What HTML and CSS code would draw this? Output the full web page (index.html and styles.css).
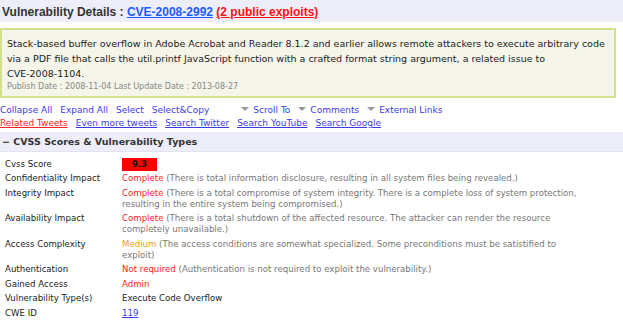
FILE: index.html
```html
<!DOCTYPE html>
<html lang="en">
  <head>
    <meta charset="UTF-8" />
    <title>CVE-2008-2992 : Vulnerability Details</title>
    <link rel="stylesheet" href="styles.css">
  </head>
  <body>
    <div class="page">
      <h1 class="title">
        Vulnerability Details :
        <a href="#" class="cve-link">CVE-2008-2992</a>
        <a href="#" class="exploits">(2 public exploits)</a>
      </h1>

      <div class="summary">
        <div class="summary-text">
          Stack-based buffer overflow in Adobe Acrobat and Reader 8.1.2 and earlier allows remote attackers to execute arbitrary code via a PDF file that calls the util.printf JavaScript function with a crafted format string argument, a related issue to <span class="nowrap">CVE-2008-1104.</span>
        </div>
        <div class="dates">Publish Date : 2008-11-04 Last Update Date : 2013-08-27</div>
      </div>

      <div class="tools">
        <div class="tool-row">
          <span class="tool">Collapse All</span>
          <span class="tool">Expand All</span>
          <span class="tool">Select</span>
          <span class="tool">Select&amp;Copy</span>
          <span class="tool drop spaced">Scroll To</span>
          <span class="tool drop">Comments</span>
          <span class="tool drop">External Links</span>
        </div>
        <div class="tool-row">
          <a href="#" class="tool-link hot">Related Tweets</a>
          <a href="#" class="tool-link">Even more tweets</a>
          <a href="#" class="tool-link">Search Twitter</a>
          <a href="#" class="tool-link">Search YouTube</a>
          <a href="#" class="tool-link">Search Google</a>
        </div>
      </div>

      <div class="section-head">&minus; CVSS Scores &amp; Vulnerability Types</div>

      <table class="cvss">
        <tr>
          <th>Cvss Score</th>
          <td><span class="score">9.3</span></td>
        </tr>
        <tr>
          <th>Confidentiality Impact</th>
          <td><span class="bad">Complete</span> (There is total information disclosure, resulting in all system files being revealed.)</td>
        </tr>
        <tr>
          <th>Integrity Impact</th>
          <td><span class="bad">Complete</span> (There is a total compromise of system integrity. There is a complete loss of system protection, resulting in the entire system being compromised.)</td>
        </tr>
        <tr>
          <th>Availability Impact</th>
          <td><span class="bad">Complete</span> (There is a total shutdown of the affected resource. The attacker can render the resource completely unavailable.)</td>
        </tr>
        <tr>
          <th>Access Complexity</th>
          <td><span class="warn">Medium</span> (The access conditions are somewhat specialized. Some preconditions must be satistified to exploit)</td>
        </tr>
        <tr>
          <th>Authentication</th>
          <td><span class="bad">Not required</span> (Authentication is not required to exploit the vulnerability.)</td>
        </tr>
        <tr>
          <th>Gained Access</th>
          <td><span class="bad">Admin</span></td>
        </tr>
        <tr>
          <th>Vulnerability Type(s)</th>
          <td class="plain">Execute Code Overflow</td>
        </tr>
        <tr>
          <th>CWE ID</th>
          <td><a href="#" class="cwe">119</a></td>
        </tr>
      </table>

      <div class="next-head"></div>
    </div>
  </body>
</html>
```

FILE: styles.css
```css
body {
  margin: 0;
  background: #fff;
  font-family: "DejaVu Sans", Verdana, sans-serif;
  font-size: 9px;
  color: #333;
}
.page {
  width: 623px;
}
.title {
  margin: 0;
  height: 22px;
  padding: 5px 0 0 2px;
  box-sizing: border-box;
  background: #eeeefb;
  font-family: "Liberation Sans", Arial, sans-serif;
  font-size: 12px;
  font-weight: bold;
  color: #333;
}
.cve-link {
  color: #1a5cff;
  text-decoration: underline;
}
.exploits {
  color: #ff1111;
  text-decoration: underline;
}
.summary {
  margin: 6px 7px 0 0;
  border: 2px solid #d3e08f;
  background: #f5f5ea;
  padding: 6px 5px 4px 5px;
}
.summary-text {
  font-size: 9.5px;
  line-height: 15px;
  color: #222;
}
.nowrap {
  white-space: nowrap;
}
.dates {
  font-size: 8px;
  color: #888;
  line-height: 11px;
}
.tools {
  padding: 6px 0 0 0;
}
.tool-row {
  display: flex;
  gap: 8px;
  line-height: 13px;
  font-size: 9px;
}
.tool {
  color: #3b3be6;
}
.drop::before {
  content: "";
  display: inline-block;
  border-left: 4px solid transparent;
  border-right: 4px solid transparent;
  border-top: 4px solid #999;
  margin-right: 4px;
  vertical-align: 2px;
}
.spaced {
  margin-left: 24px;
}
.tool-link {
  color: #3b3be6;
  text-decoration: underline;
}
.tool-link.hot {
  color: #ff2222;
}
.section-head {
  margin-top: 2px;
  height: 20px;
  line-height: 19px;
  background: #eeeefb;
  border-bottom: 1px solid #e2e2f2;
  box-sizing: border-box;
  padding-left: 2px;
  font-size: 9.5px;
  font-weight: bold;
  color: #333;
}
.cvss {
  border-collapse: collapse;
  margin: 5px 0 0 3px;
  width: 584px;
}
.cvss th,
.cvss td {
  text-align: left;
  vertical-align: top;
  padding: 1.5px 2px 2px 2px;
  line-height: 11px;
  font-size: 8.6px;
}
.cvss th {
  width: 113px;
  font-weight: normal;
  color: #222;
}
.cvss td {
  color: #777;
}
.cvss td.plain {
  color: #222;
}
.score {
  display: inline-block;
  width: 35px;
  height: 13px;
  line-height: 13px;
  margin: -1px 0 -1px 0;
  background: #ff0000;
  color: #111;
  font-weight: bold;
  text-align: center;
}
.bad {
  color: #ff2222;
}
.warn {
  color: #f0a020;
}
.cwe {
  color: #3b3be6;
  text-decoration: underline;
}
.next-head {
  margin-top: 3px;
  height: 10px;
  background: #eeeefb;
}
```
